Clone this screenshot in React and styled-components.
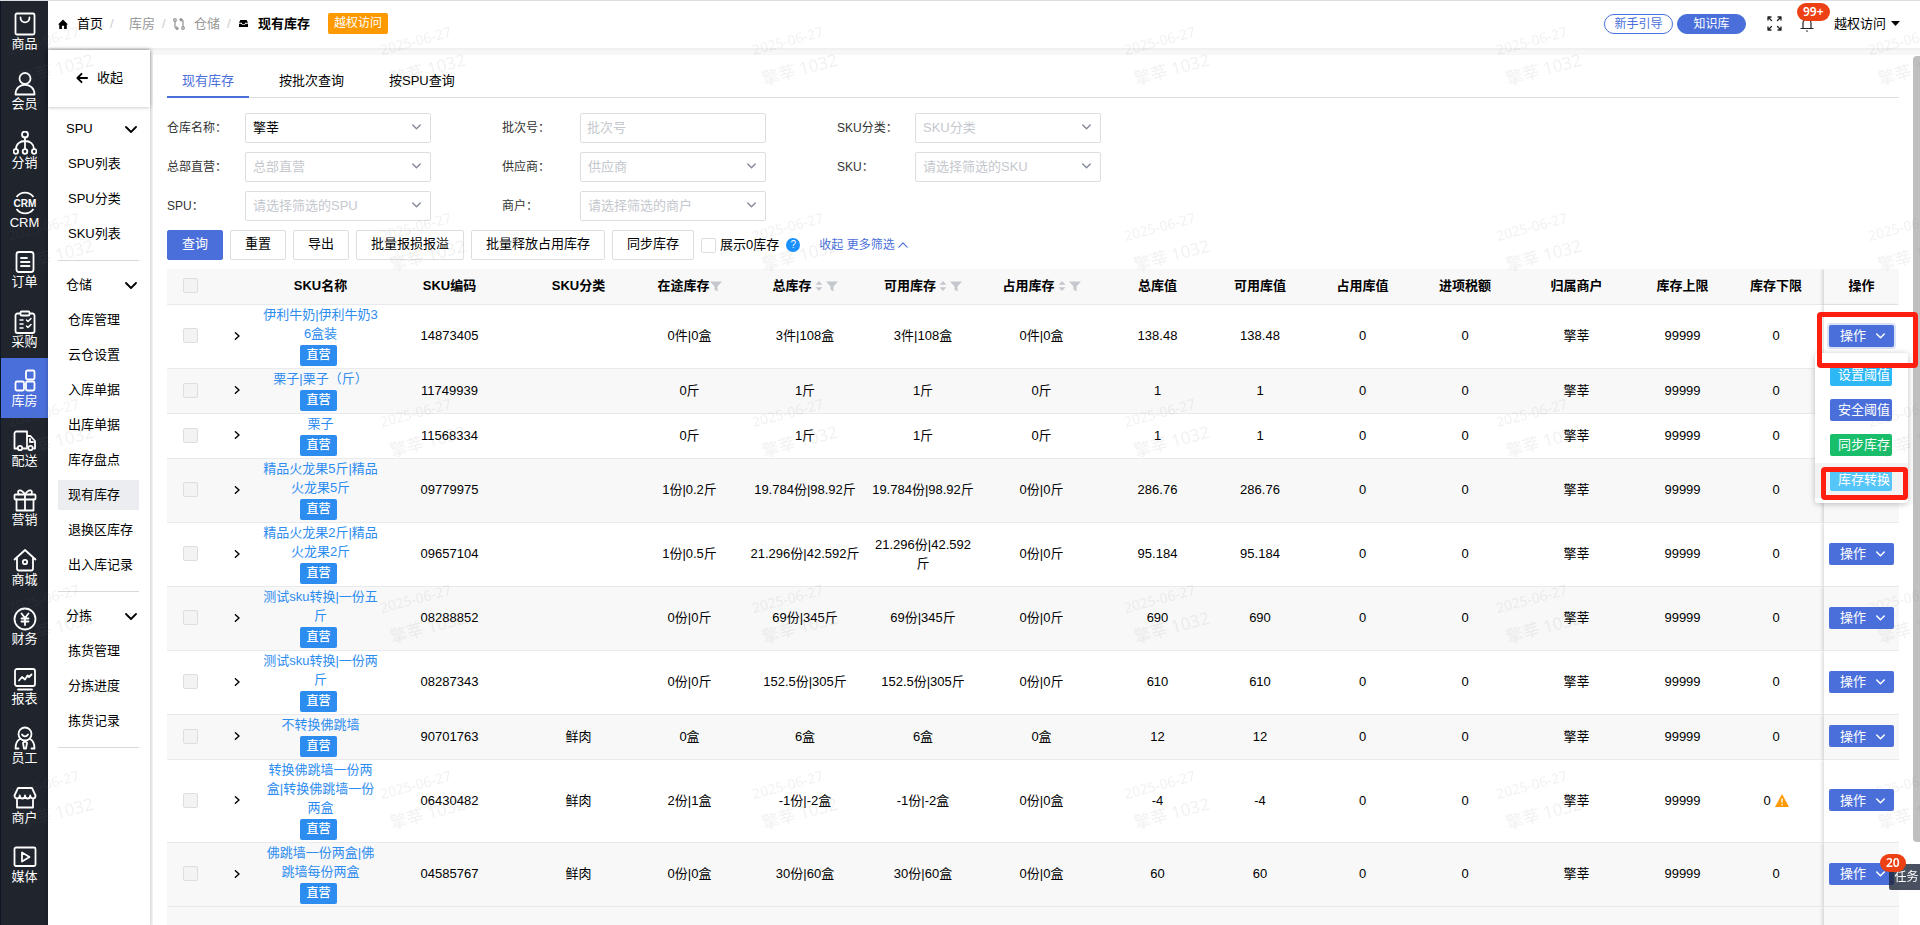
import React from 'react';
import styled, { createGlobalStyle, css } from 'styled-components';

const BLUE = '#4a6fdb';
const LINK = '#2d8cf0';

const GlobalStyle = createGlobalStyle`
  * { box-sizing: border-box; }
  body {
    margin: 0;
    overflow: hidden;
    background: #f7f7f7;
    color: #000;
    font: 13px/20px "Liberation Sans", "Noto Sans CJK SC", sans-serif;
  }
  a { color: inherit; text-decoration: none; }
  button, input, select { font: inherit; color: inherit; }
  button { cursor: pointer; }
  svg { display: block; flex: none; }
`;

const Page = styled.div`
  display: flex;
  height: 100vh;
  border-top: 1px solid #dcdee2;
`;

/* left rail */

const Rail = styled.nav`
  display: flex;
  flex-direction: column;
  flex: none;
  width: 48px;
  padding-bottom: 31px;
  background: #1f242d;
  border-left: 1px solid #0c1524;
`;

const RailItem = styled.a`
  display: flex;
  flex: 1;
  flex-direction: column;
  align-items: center;
  padding-top: 11px;
  color: #fff;
  line-height: 16px;
  background: ${({ $active }) => ($active ? BLUE : 'transparent')};
`;

const LineSvg = styled.svg`
  fill: none;
  stroke: currentColor;
  stroke-width: ${({ $stroke }) => $stroke || 2};
  stroke-linecap: round;
  stroke-linejoin: round;
`;

/* page header */

const Right = styled.div`
  display: flex;
  flex: 1;
  flex-direction: column;
  min-width: 0;
`;

const Header = styled.header`
  display: flex;
  align-items: center;
  flex: none;
  height: 49px;
  padding: 0 20px 2px 10px;
  background: #fff;
  border-bottom: 2px solid #f0f0f0;
`;

const Crumbs = styled.nav`
  display: flex;
  align-items: center;
`;

const Crumb = styled.a`
  display: flex;
  align-items: center;
  gap: 9px;
  color: ${({ $muted }) => ($muted ? '#999' : '#000')};
  font-weight: ${({ $current }) => ($current ? 'bold' : 'normal')};
`;

const CrumbGap = styled.span`
  width: 8px;
`;

const Slash = styled.span`
  width: 4px;
  margin: 0 7px;
  color: #ccc;
`;

const AccessTag = styled.span`
  margin-left: 18px;
  padding: 0 6px;
  border-radius: 2px;
  background: #f90;
  color: #fff;
  font-size: 12px;
  line-height: 21px;
`;

const HeaderTools = styled.div`
  display: flex;
  align-items: center;
  margin-left: auto;
`;

const Pill = styled.button`
  width: 69px;
  height: 20px;
  margin-right: 4px;
  padding: 0;
  border: 1px solid ${BLUE};
  border-radius: 10px;
  background: ${({ $solid }) => ($solid ? BLUE : '#fff')};
  color: ${({ $solid }) => ($solid ? '#fff' : BLUE)};
  font-size: 12px;
  line-height: 18px;
`;

const IconButton = styled.button`
  position: relative;
  margin-left: 17px;
  padding: 0;
  border: 0;
  background: none;
  color: #222;
`;

const Badge = styled.span`
  position: absolute;
  left: ${({ $left }) => $left}px;
  top: ${({ $top }) => $top}px;
  height: 18px;
  padding: 0 6px;
  border-radius: 9px;
  background: #ed4014;
  color: #fff;
  font: 600 12px/18px "Noto Sans", sans-serif;
`;

const UserButton = styled.button`
  display: flex;
  align-items: center;
  gap: 5px;
  margin-left: 19px;
  padding: 0;
  border: 0;
  background: none;
`;

/* second menu */

const Body = styled.div`
  display: flex;
  flex: 1;
  min-height: 0;
`;

const Side = styled.aside`
  flex: none;
  width: 102px;
  margin-right: 3px;
  background: #fff;
  box-shadow: 0 0 4px rgba(0, 0, 0, 0.25);
`;

const Collapse = styled.button`
  display: flex;
  align-items: center;
  gap: 9px;
  width: 100%;
  height: 57px;
  padding: 0 0 2px 28px;
  border: 0;
  background: #fff;
  box-shadow: 0 0 4px rgba(0, 0, 0, 0.3);
`;

const MenuGroup = styled.section`
  margin: 0 11px 0 10px;
  padding: 6px 0 9px;
  border-bottom: 1px solid #d7d9dd;

  &:first-of-type { padding-top: 4px; }
`;

const MenuTitle = styled.button`
  display: flex;
  align-items: center;
  justify-content: space-between;
  width: 100%;
  height: 35px;
  padding: 0 2px 0 8px;
  border: 0;
  background: none;
`;

const MenuLink = styled.a`
  display: block;
  height: 30px;
  margin: 3px 0 5px;
  padding-left: 10px;
  line-height: 30px;
  white-space: nowrap;
  background: ${({ $active }) => ($active ? '#ecedf1' : 'none')};

  & + & { margin-top: 0; }
  &:last-child { margin-bottom: 2px; }
`;

/* content */

const Content = styled.main`
  flex: 1;
  min-width: 0;
  margin-top: 5px;
  padding: 0 21px 0 14px;
  background: #fff;
`;

const Tabs = styled.div`
  display: flex;
  gap: 15px;
  border-bottom: 1px solid #dcdee2;
`;

const Tab = styled.button`
  margin-bottom: -1px;
  padding: 16px 15px 5px;
  border: 0;
  border-bottom: 2px solid ${({ $active }) => ($active ? BLUE : 'transparent')};
  background: none;
  color: ${({ $active }) => ($active ? BLUE : '#000')};
  line-height: 20px;
`;

const Filters = styled.form`
  display: grid;
  grid-template-columns: repeat(3, 264px);
  gap: 9px 71px;
  margin-top: 15px;
`;

const Field = styled.div`
  display: grid;
  grid-template-columns: 78px 1fr;
  align-items: center;
`;

const FieldLabel = styled.label`
  font-size: 12px;
  color: #333;
`;

const control = css`
  width: 100%;
  height: 30px;
  padding: 0 7px;
  border: 1px solid #dcdee2;
  border-radius: 2px;
  outline: 0;
  background: #fff;
`;

const TextInput = styled.input`
  ${control}
  padding: 0 6px 2px;
  &::placeholder { color: #c5c8ce; opacity: 1; }
`;

const SelectBox = styled.div`
  position: relative;

  svg {
    position: absolute;
    right: 10px;
    top: 9px;
    color: #808695;
    pointer-events: none;
  }
`;

const Select = styled.select`
  ${control}
  appearance: none;
  color: ${({ $empty }) => ($empty ? '#c5c8ce' : '#000')};
`;

const Actions = styled.div`
  display: flex;
  align-items: center;
  gap: 7px;
  margin: 9px 0;
`;

const Button = styled.button`
  height: 30px;
  padding: 0 14px 2px;
  border: 1px solid ${({ $primary }) => ($primary ? BLUE : '#dcdee2')};
  border-radius: 2px;
  background: ${({ $primary }) => ($primary ? BLUE : '#fff')};
  color: ${({ $primary }) => ($primary ? '#fff' : '#000')};
  white-space: nowrap;
`;

const Check = styled.input`
  appearance: none;
  display: block;
  flex: none;
  width: 15px;
  height: 15px;
  margin: 0;
  border: 1px solid #dcdee2;
  border-radius: 2px;
  background: #fff;

  &:disabled { background: #f3f3f3; }
`;

const CheckLabel = styled.label`
  display: flex;
  align-items: center;
  gap: 4px;
`;

const Help = styled.span`
  width: 14px;
  height: 14px;
  border-radius: 7px;
  background: #1890ff;
  color: #fff;
  font-size: 10px;
  line-height: 14px;
  text-align: center;
`;

const MoreLink = styled.a`
  display: flex;
  align-items: center;
  gap: 3px;
  margin-left: 12px;
  color: ${BLUE};
  font-size: 12px;
`;

/* stock table */

const Table = styled.table`
  width: 100%;
  table-layout: fixed;
  border-collapse: separate;
  border-spacing: 0;
  line-height: 19px;
  text-align: center;
`;

const Col = styled.col`
  width: ${({ $w }) => $w}px;
`;

const cell = css`
  padding: 0 2px 2px;
  border-bottom: 1px solid #e8eaec;
  word-break: break-all;
`;

const opCell = css`
  position: relative;
  box-shadow: -2px 0 3px rgba(0, 0, 0, 0.13);
  clip-path: ${({ $open }) => ($open ? 'none' : 'inset(0 0 0 -6px)')};
  z-index: ${({ $open }) => ($open ? 2 : 0)};
`;

const Th = styled.th`
  ${cell}
  height: 36px;
  background: #f8f8f8;
  ${({ $op }) => $op && opCell}
`;

const Td = styled.td`
  ${cell}
  background: #fff;
  ${({ $op }) => $op && opCell}
`;

const NameTd = styled(Td)`
  padding-bottom: 0;
`;

const Row = styled.tr`
  &:nth-child(even) > td { background: #f8f8f8; }
`;

const FootCell = styled.td`
  height: 40px;
  background: #f8f8f8;
  ${({ $op }) => $op && opCell}
`;

const HeadText = styled.span`
  display: inline-flex;
  align-items: center;
`;

const Center = styled.div`
  display: flex;
  justify-content: center;
`;

const ExpandButton = styled.button`
  padding: 0;
  border: 0;
  background: none;
`;

const SkuLink = styled.a`
  display: block;
  color: ${LINK};
`;

const OwnTag = styled.span`
  width: 37px;
  margin: 2px 4px 2px 0;
  border-radius: 2px;
  background: ${LINK};
  color: #fff;
  font-size: 12px;
  font-weight: 500;
  line-height: 21px;
`;

const OpWrap = styled.div`
  display: flex;
  justify-content: center;
`;

const OpButton = styled.button`
  display: flex;
  align-items: center;
  justify-content: space-between;
  width: 65px;
  height: 22px;
  padding: 0 9px 0 11px;
  border: 0;
  border-radius: 2px;
  background: ${BLUE};
  color: #fff;
  box-shadow: ${({ $open }) => ($open ? '0 0 0 2px rgba(74, 111, 219, 0.2)' : 'none')};
`;

const Menu = styled.div`
  position: absolute;
  top: 48px;
  right: -9px;
  width: 93px;
  padding: 5px 0;
  border-radius: 3px;
  background: #fff;
  box-shadow: 0 1px 6px rgba(0, 0, 0, 0.25);
`;

const MenuItem = styled.div`
  position: relative;
  display: flex;
  align-items: center;
  height: 35px;
  padding: 0 0 1px 15px;
  background: ${({ $hover }) => ($hover ? '#f3f3f3' : '#fff')};
`;

const MenuButton = styled.button`
  width: 62px;
  height: 22px;
  padding: 0 2px 0 8px;
  border: 0;
  border-radius: 2px;
  background: ${({ $color }) => $color};
  color: #fff;
  line-height: 20px;
  white-space: nowrap;
`;

const Mark = styled.div`
  position: absolute;
  top: ${({ $top }) => $top}px;
  left: ${({ $left }) => $left}px;
  width: ${({ $w }) => $w}px;
  height: ${({ $h }) => $h}px;
  border: 5px solid #ff1e10;
  border-radius: 4px;
  pointer-events: none;
`;

const LowStock = styled.span`
  display: inline-flex;
  align-items: center;
  gap: 4px;
`;

/* floating parts */

const ScrollThumb = styled.div`
  position: fixed;
  top: 56px;
  right: 0;
  width: 7px;
  height: 85vh;
  border-radius: 4px 0 0 4px;
  background: #bfbfbf;
`;

const TaskButton = styled.button`
  position: fixed;
  right: 0;
  bottom: 35px;
  z-index: 3;
  width: 31px;
  height: 26px;
  padding: 0 0 0 4px;
  border: 0;
  border-radius: 2px 0 0 2px;
  background: rgba(28, 36, 56, 0.8);
  color: #fff;
  font-size: 12px;
  white-space: nowrap;
`;

const Watermark = styled.div`
  position: fixed;
  inset: 0;
  z-index: 5;
  display: grid;
  grid-template-columns: repeat(6, 372px);
  grid-auto-rows: 186px;
  overflow: hidden;
  pointer-events: none;
  color: rgba(120, 120, 120, 0.1);
  font-family: "Noto Sans", "Noto Sans CJK SC", sans-serif;
`;

const Stamp = styled.div`
  padding: 28px 0 0 7px;

  span {
    display: block;
    width: 80px;
    font-size: 14px;
    line-height: 24px;
    transform: rotate(-15deg);
  }
  span + span {
    margin: 5px 0 0 10px;
    font-size: 17px;
  }
`;

const Chevron = ({ size = 12, stroke = 2, up }) => (
  <LineSvg width={size} height={size} viewBox="0 0 12 12" $stroke={stroke}>
    <path d={up ? 'M1 8.5 6 3.5 11 8.5' : 'M1 4 6 9 11 4'} />
  </LineSvg>
);

const SortIcon = () => (
  <svg width="14" height="12" viewBox="0 0 14 12" fill="#c5c8ce">
    <path d="M3.500 4.800 7 1 10.500 4.800zM3.500 7.200 7 11 10.500 7.200z" />
  </svg>
);

const FilterIcon = () => (
  <svg width="12" height="12" viewBox="0 0 12 12" fill="#c5c8ce">
    <path d="M0 1.500H12L7.500 6.500V11.500L4.500 9.500V6.500z" />
  </svg>
);

const railIcons = {
  bag: <><rect x="2.5" y="1.5" width="19" height="21" rx="1.5" /><path d="M7.500 5.500c0 6.500 9 6.500 9 0" /></>,
  member: <><circle cx="12" cy="6.5" r="5.500" /><path d="M2.500 22.500c0-13 19-13 19 0z" /></>,
  share: <><circle cx="12" cy="3.500" r="3" /><circle cx="2.800" cy="20.500" r="2.300" /><circle cx="12" cy="20.500" r="2.300" /><circle cx="21.200" cy="20.500" r="2.300" /><path d="M12 6.500v11.500M3 18c0-5 4-8 9-8s9 3 9 8" /></>,
  order: <><rect x="3.500" y="2" width="17" height="20" rx="2.500" /><path d="M8 8h6M8 12h8.500M8 16h8.500" /></>,
  purchase: <><path d="M7 3.500H4.500a2 2 0 0 0-2 2V21a2 2 0 0 0 2 2h15a2 2 0 0 0 2-2V5.500a2 2 0 0 0-2-2H17" /><rect x="7.500" y="1.500" width="9" height="4" rx="1" /><path d="M7 10h3M7 14h3M7 18h3M13.500 10l1.500 1.500 3-3M13.500 16l1.500 1.500 3-3" strokeWidth="1.5" /></>,
  store: <><rect x="13" y="1.500" width="8.500" height="9" rx="1.500" /><rect x="2.500" y="12.500" width="8.500" height="9" rx="1.500" /><rect x="13" y="12.500" width="8.500" height="9" rx="1.500" /></>,
  truck: <><path d="M4.500 19.500h-3v-15a2 2 0 0 1 2-2H14v17H10M14 7h3.500l4.500 5v7.500h-1" /><circle cx="7" cy="19" r="2.200" /><circle cx="17.500" cy="19" r="2.200" /><path d="M17 10v3h3" /></>,
  gift: <><rect x="1.500" y="6.500" width="21" height="5" rx="1" /><path d="M3.500 11.500V22.500h17V11.500M12 6.500v16M12 6.500C8 0 3 2 6 6.500M12 6.500C16 0 21 2 18 6.500" /></>,
  mall: <><path d="M1.500 11.500 12 2l10.500 9.500M4 10v10.500a2 2 0 0 0 2 2h12a2 2 0 0 0 2-2V10" /><circle cx="12" cy="14" r="2.200" /></>,
  finance: <><circle cx="12" cy="12" r="10.500" /><path d="M8.500 6.500 12 11l3.500-4.500M12 11v7M8.500 11.500h7M8.500 14.500h7" /></>,
  report: <><rect x="2" y="2" width="20" height="17" rx="2" /><path d="M6 13.500l3-3.500 3 2.500 2.500-4 1.500 1.500 2.500-2.500M5 22.500h14" /></>,
  staff: <><circle cx="12" cy="8" r="6.500" /><path d="M9 8.500c1.500 2.500 4.500 2.500 6 0M7 13c-3 1.500-4.500 5-4.500 9.500h3M17 13c3 1.500 4.500 5 4.500 9.500h-3M12 15l-2 2 1 5.500h2l1-5.500z" /></>,
  shop: <><path d="M5 2h14l3.500 7.500c0 4-5 4-5.250 0 0 4-5.250 4-5.250 0 0 4-5.250 4-5.250 0 0 4-5.250 4-5.250 0zM4 14v7.500h16V14" /></>,
  media: <><rect x="1.500" y="2.500" width="21" height="18.500" rx="1.500" /><path d="M9 7.500v9l7.500-4.500z" /></>,
};

const CrmIcon = () => (
  <svg width="24" height="24" viewBox="0 0 24 24" fill="none" stroke="currentColor" strokeWidth="1.800">
    <path d="M3.500 6a10.500 10.500 0 0 1 17 0M3.500 18a10.500 10.500 0 0 0 17 0" />
    <text x="12" y="15.500" textAnchor="middle" fontSize="10" fontWeight="bold" fill="currentColor" stroke="none">CRM</text>
  </svg>
);

const rail = [
  ['bag', '商品'], ['member', '会员'], ['share', '分销'], ['crm', 'CRM'], ['order', '订单'],
  ['purchase', '采购'], ['store', '库房'], ['truck', '配送'], ['gift', '营销'], ['mall', '商城'],
  ['finance', '财务'], ['report', '报表'], ['staff', '员工'], ['shop', '商户'], ['media', '媒体'],
];

const menu = [
  { title: 'SPU', items: ['SPU列表', 'SPU分类', 'SKU列表'] },
  { title: '仓储', items: ['仓库管理', '云仓设置', '入库单据', '出库单据', '库存盘点', '现有库存', '退换区库存', '出入库记录'] },
  { title: '分拣', items: ['拣货管理', '分拣进度', '拣货记录'] },
];

const filters = [
  { id: 'warehouse', label: '仓库名称：', value: '擎莘' },
  { id: 'batch', label: '批次号：', placeholder: '批次号', text: true },
  { id: 'category', label: 'SKU分类：', placeholder: 'SKU分类' },
  { id: 'direct', label: '总部直营：', placeholder: '总部直营' },
  { id: 'supplier', label: '供应商：', placeholder: '供应商' },
  { id: 'sku', label: 'SKU：', placeholder: '请选择筛选的SKU' },
  { id: 'spu', label: 'SPU：', placeholder: '请选择筛选的SPU' },
  { id: 'merchant', label: '商户：', placeholder: '请选择筛选的商户' },
];

const columns = [
  { w: 119, title: 'SKU名称' },
  { w: 139, title: 'SKU编码' },
  { w: 119, title: 'SKU分类' },
  { w: 103, title: '在途库存', filter: true },
  { w: 128, title: '总库存', sort: true, filter: true },
  { w: 108, title: '可用库存', sort: true, filter: true },
  { w: 129, title: '占用库存', sort: true, filter: true },
  { w: 103, title: '总库值' },
  { w: 102, title: '可用库值' },
  { w: 103, title: '占用库值' },
  { w: 102, title: '进项税额' },
  { w: 121, title: '归属商户' },
  { w: 91, title: '库存上限' },
  { w: 96, title: '库存下限' },
];

// name, code, category, on the way, total, available, occupied, value
const rows = [
  ['伊利牛奶|伊利牛奶36盒装', '14873405', '', '0件|0盒', '3件|108盒', '3件|108盒', '0件|0盒', '138.48'],
  ['栗子|栗子（斤）', '11749939', '', '0斤', '1斤', '1斤', '0斤', '1'],
  ['栗子', '11568334', '', '0斤', '1斤', '1斤', '0斤', '1'],
  ['精品火龙果5斤|精品火龙果5斤', '09779975', '', '1份|0.2斤', '19.784份|98.92斤', '19.784份|98.92斤', '0份|0斤', '286.76'],
  ['精品火龙果2斤|精品火龙果2斤', '09657104', '', '1份|0.5斤', '21.296份|42.592斤', '21.296份|42.592斤', '0份|0斤', '95.184'],
  ['测试sku转换|一份五斤', '08288852', '', '0份|0斤', '69份|345斤', '69份|345斤', '0份|0斤', '690'],
  ['测试sku转换|一份两斤', '08287343', '', '0份|0斤', '152.5份|305斤', '152.5份|305斤', '0份|0斤', '610'],
  ['不转换佛跳墙', '90701763', '鲜肉', '0盒', '6盒', '6盒', '0盒', '12'],
  ['转换佛跳墙一份两盒|转换佛跳墙一份两盒', '06430482', '鲜肉', '2份|1盒', '-1份|-2盒', '-1份|-2盒', '0份|0盒', '-4'],
  ['佛跳墙一份两盒|佛跳墙每份两盒', '04585767', '鲜肉', '0份|0盒', '30份|60盒', '30份|60盒', '0份|0盒', '60'],
];

const opItems = [
  ['设置阈值', '#2db7f5'],
  ['安全阈值', BLUE],
  ['同步库存', '#19be6b'],
  ['库存转换', '#56c5f7'],
];

const HeaderBar = () => (
  <Header>
    <Crumbs aria-label="breadcrumb">
      <Crumb href="#">
        <svg width="10" height="10" viewBox="0 0 12 12"><path d="M6 .5 12 6.500H10.500V12H7.300V8H4.700V12H1.500V6.500H0z" /></svg>
        首页
      </Crumb>
      <Slash>/</Slash>
      <CrumbGap />
      <Crumb href="#" $muted>库房</Crumb>
      <Slash>/</Slash>
      <Crumb href="#" $muted>
        <LineSvg width="12" height="12" viewBox="0 0 12 12" $stroke={1.3}>
          <path d="M2 3.500V9a1.500 1.500 0 0 0 1.500 1.500H5M10 8.500V3A1.500 1.500 0 0 0 8.500 1.500H7M3.700 9l1.500 1.500-1.500 1.200M8.300.3 6.800 1.500l1.500 1.500" />
          <circle cx="2" cy="2" r="1.300" /><circle cx="10" cy="10" r="1.300" />
        </LineSvg>
        仓储
      </Crumb>
      <Slash>/</Slash>
      <Crumb href="#" $current>
        <svg width="11" height="9" viewBox="0 0 12 10"><path d="M2.500 1h7L11 4.200H7.800a1.800 1.800 0 0 1-3.600 0H1zM1 5.200h2.500c1 2 4 2 5 0H11V9H1z" /></svg>
        现有库存
      </Crumb>
      <AccessTag>越权访问</AccessTag>
    </Crumbs>
    <HeaderTools>
      <Pill>新手引导</Pill>
      <Pill $solid>知识库</Pill>
      <IconButton aria-label="全屏">
        <LineSvg width="15" height="15" viewBox="0 0 15 15" $stroke={1.3}>
          <path d="M1 4V1h3M1 1l3.500 3.500M11 1h3v3M14 1l-3.500 3.500M1 11v3h3M1 14l3.500-3.500M14 11v3h-3M14 14l-3.500-3.500" />
        </LineSvg>
      </IconButton>
      <IconButton aria-label="通知">
        <LineSvg width="16" height="16" viewBox="0 0 16 16" $stroke={1.2}>
          <path d="M2 12.500h12M4 12.500V7a4 4 0 0 1 8 0v5.500M7.500 15h1" />
        </LineSvg>
        <Badge $left={-2} $top={-13}>99+</Badge>
      </IconButton>
      <UserButton>
        越权访问
        <svg width="9" height="5" viewBox="0 0 9 5"><path d="M0 0H9L4.500 5z" /></svg>
      </UserButton>
    </HeaderTools>
  </Header>
);

const SideMenu = () => (
  <Side>
    <Collapse>
      <LineSvg width="12" height="12" viewBox="0 0 13 12" $stroke={2}>
        <path d="M12 6H1.500M6 1.500 1.500 6 6 10.500" />
      </LineSvg>
      收起
    </Collapse>
    {menu.map(group => (
      <MenuGroup key={group.title}>
        <MenuTitle>{group.title}<Chevron size={12} stroke={1.8} /></MenuTitle>
        {group.items.map(item => (
          <MenuLink key={item} href="#" $active={item === '现有库存'}>{item}</MenuLink>
        ))}
      </MenuGroup>
    ))}
  </Side>
);

const FilterField = ({ id, label, placeholder, value, text }) => (
  <Field>
    <FieldLabel htmlFor={id}>{label}</FieldLabel>
    {text ? <TextInput id={id} placeholder={placeholder} /> : (
      <SelectBox>
        <Select id={id} $empty={!value}>
          <option>{value || placeholder}</option>
        </Select>
        <Chevron size={9} stroke={1.7} />
      </SelectBox>
    )}
  </Field>
);

const StockRow = ({ row, open, low }) => {
  const [name, ...cells] = row;
  const values = [...cells, cells[6], '0', '0', '擎莘', '99999'];

  return (
    <Row>
      <Td><Center><Check type="checkbox" disabled aria-label={name} /></Center></Td>
      <Td>
        <Center>
          <ExpandButton aria-label="展开">
            <LineSvg width="8" height="8" viewBox="0 0 10 10" $stroke={1.8}><path d="M3 1 7.500 5 3 9" /></LineSvg>
          </ExpandButton>
        </Center>
      </Td>
      <NameTd>
        <SkuLink href="#">{name}</SkuLink>
        <Center><OwnTag>直营</OwnTag></Center>
      </NameTd>
      {values.map((value, i) => <Td key={i}>{value}</Td>)}
      <Td>
        {low ? (
          <LowStock>
            0
            <svg width="14" height="13" viewBox="0 0 14 13"><path d="M7 0 14 13H0z" fill="#f90" /><path d="M7 4.500v4M7 9.800v1.500" stroke="#fff" strokeWidth="1.400" /></svg>
          </LowStock>
        ) : '0'}
      </Td>
      <Td $op $open={open}>
        <OpWrap>
          <OpButton $open={open}>操作<Chevron size={9} stroke={2} /></OpButton>
        </OpWrap>
        {open && (
          <>
            <Menu>
              {opItems.map(([label, color], i) => (
                <MenuItem key={label} $hover={i === 3}>
                  <MenuButton $color={color}>{label}</MenuButton>
                  {i === 3 && <Mark $top={4} $left={6} $w={87} $h={33} />}
                </MenuItem>
              ))}
            </Menu>
            <Mark $top={7} $left={-7} $w={101} $h={56} />
          </>
        )}
      </Td>
    </Row>
  );
};

const StockTable = () => (
  <Table>
    <colgroup>
      <Col $w={46} />
      <Col $w={48} />
      {columns.map(col => <Col key={col.title} $w={col.w} />)}
      <Col $w={75} />
    </colgroup>
    <thead>
      <tr>
        <Th><Center><Check type="checkbox" disabled aria-label="全选" /></Center></Th>
        <Th />
        {columns.map(col => (
          <Th key={col.title}>
            <HeadText>
              {col.title}
              {col.sort && <SortIcon />}
              {col.filter && <FilterIcon />}
            </HeadText>
          </Th>
        ))}
        <Th $op>操作</Th>
      </tr>
    </thead>
    <tbody>
      {rows.map((row, i) => <StockRow key={row[1]} row={row} open={i === 0} low={i === 8} />)}
    </tbody>
    <tfoot>
      <tr>
        <FootCell colSpan={16} />
        <FootCell $op />
      </tr>
    </tfoot>
  </Table>
);

const App = () => (
  <>
    <GlobalStyle />
    <Page>
      <Rail>
        {rail.map(([icon, label]) => (
          <RailItem key={label} href="#" $active={icon === 'store'}>
            {icon === 'crm' ? <CrmIcon /> : (
              <LineSvg width="24" height="24" viewBox="0 0 24 24" $stroke={1.8}>{railIcons[icon]}</LineSvg>
            )}
            {label}
          </RailItem>
        ))}
      </Rail>
      <Right>
        <HeaderBar />
        <Body>
          <SideMenu />
          <Content>
            <Tabs>
              <Tab $active>现有库存</Tab>
              <Tab>按批次查询</Tab>
              <Tab>按SPU查询</Tab>
            </Tabs>
            <Filters>
              {filters.map(item => <FilterField key={item.id} {...item} />)}
            </Filters>
            <Actions>
              <Button $primary>查询</Button>
              <Button>重置</Button>
              <Button>导出</Button>
              <Button>批量报损报溢</Button>
              <Button>批量释放占用库存</Button>
              <Button>同步库存</Button>
              <CheckLabel><Check type="checkbox" />展示0库存</CheckLabel>
              <Help>?</Help>
              <MoreLink href="#">收起 更多筛选<Chevron size={10} stroke={1.4} up /></MoreLink>
            </Actions>
            <StockTable />
          </Content>
        </Body>
      </Right>
    </Page>
    <ScrollThumb />
    <TaskButton>任务<Badge $left={-9} $top={-10}>20</Badge></TaskButton>
    <Watermark aria-hidden="true">
      {Array.from({ length: 30 }, (_, i) => (
        <Stamp key={i}>
          <span>2025-06-27</span>
          <span>擎莘 1032</span>
        </Stamp>
      ))}
    </Watermark>
  </>
);

export default App;
